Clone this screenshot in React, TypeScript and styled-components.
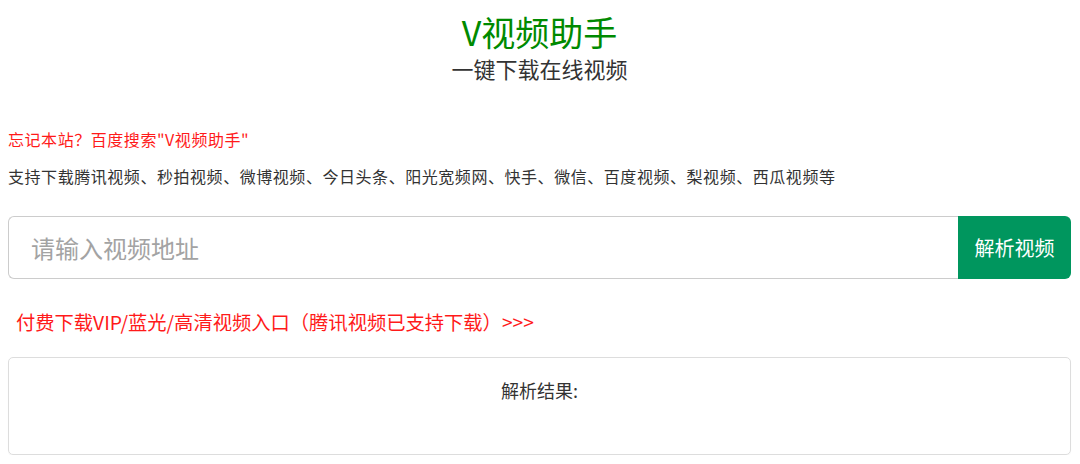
import styled, { createGlobalStyle } from "styled-components";

const GlobalStyle = createGlobalStyle`
  body {
    margin: 0;
    background: #fff;
    font-family: "Noto Sans CJK SC", "Liberation Sans", sans-serif;
    color: #333;
  }
`;

const S_Page = styled.main`
  padding: 0 9px 0 8px;
`;

const S_Header = styled.header`
  text-align: center;
  padding-top: 12px;
`;

const S_Title = styled.h1`
  margin: 0;
  font-size: 34px;
  line-height: 40px;
  font-weight: normal;
  color: #008a00;
`;

const S_Subtitle = styled.h2`
  margin: 2px 0 0;
  font-size: 22px;
  line-height: 28px;
  font-weight: normal;
  color: #333;
`;

const S_Text = styled.p<{ $red?: boolean; $gap: number }>`
  margin: ${(p) => p.$gap}px 0 0;
  font-size: 16px;
  line-height: 24px;
  letter-spacing: 0.55px;
  color: ${(p) => (p.$red ? "#ff1a1a" : "#333")};
`;

const S_SearchForm = styled.form`
  display: flex;
  margin-top: 28px;
  height: 63px;
`;

const S_Input = styled.input`
  flex: 1;
  min-width: 0;
  box-sizing: border-box;
  border: 1px solid #ccc;
  border-right: none;
  border-radius: 6px 0 0 6px;
  padding: 0 22px;
  font-family: inherit;
  font-size: 24px;
  outline: none;
  color: #333;

  &::placeholder {
    color: #a3a3a3;
  }
`;

const S_Button = styled.button`
  width: 113px;
  border: none;
  border-radius: 0 6px 6px 0;
  background-color: #00965e;
  color: #fff;
  font-family: inherit;
  font-size: 20px;
  cursor: pointer;
`;

const S_VipLink = styled.a`
  display: block;
  margin-top: 29px;
  padding-left: 8px;
  font-size: 19.3px;
  line-height: 28px;
  color: #ff1a1a;
  text-decoration: none;
`;

const S_Result = styled.section`
  margin-top: 21px;
  height: 98px;
  box-sizing: border-box;
  border: 1px solid #ddd;
  border-radius: 5px;
  box-shadow: 0 1px 1px rgba(0, 0, 0, 0.04);
  padding-top: 19px;
  text-align: center;
  font-size: 18px;
  line-height: 26px;
  color: #333;
`;

const App = () => {
  return (
    <>
      <GlobalStyle />
      <S_Page>
        <S_Header>
          <S_Title>V视频助手</S_Title>
          <S_Subtitle>一键下载在线视频</S_Subtitle>
        </S_Header>
        <S_Text $red $gap={45}>
          忘记本站？百度搜索"V视频助手"
        </S_Text>
        <S_Text $gap={13}>
          支持下载腾讯视频、秒拍视频、微博视频、今日头条、阳光宽频网、快手、微信、百度视频、梨视频、西瓜视频等
        </S_Text>
        <S_SearchForm onSubmit={(e) => e.preventDefault()}>
          <S_Input placeholder="请输入视频地址" />
          <S_Button type="submit">解析视频</S_Button>
        </S_SearchForm>
        <S_VipLink href="#">
          付费下载VIP/蓝光/高清视频入口（腾讯视频已支持下载）&gt;&gt;&gt;
        </S_VipLink>
        <S_Result>解析结果:</S_Result>
      </S_Page>
    </>
  );
};

export default App;
